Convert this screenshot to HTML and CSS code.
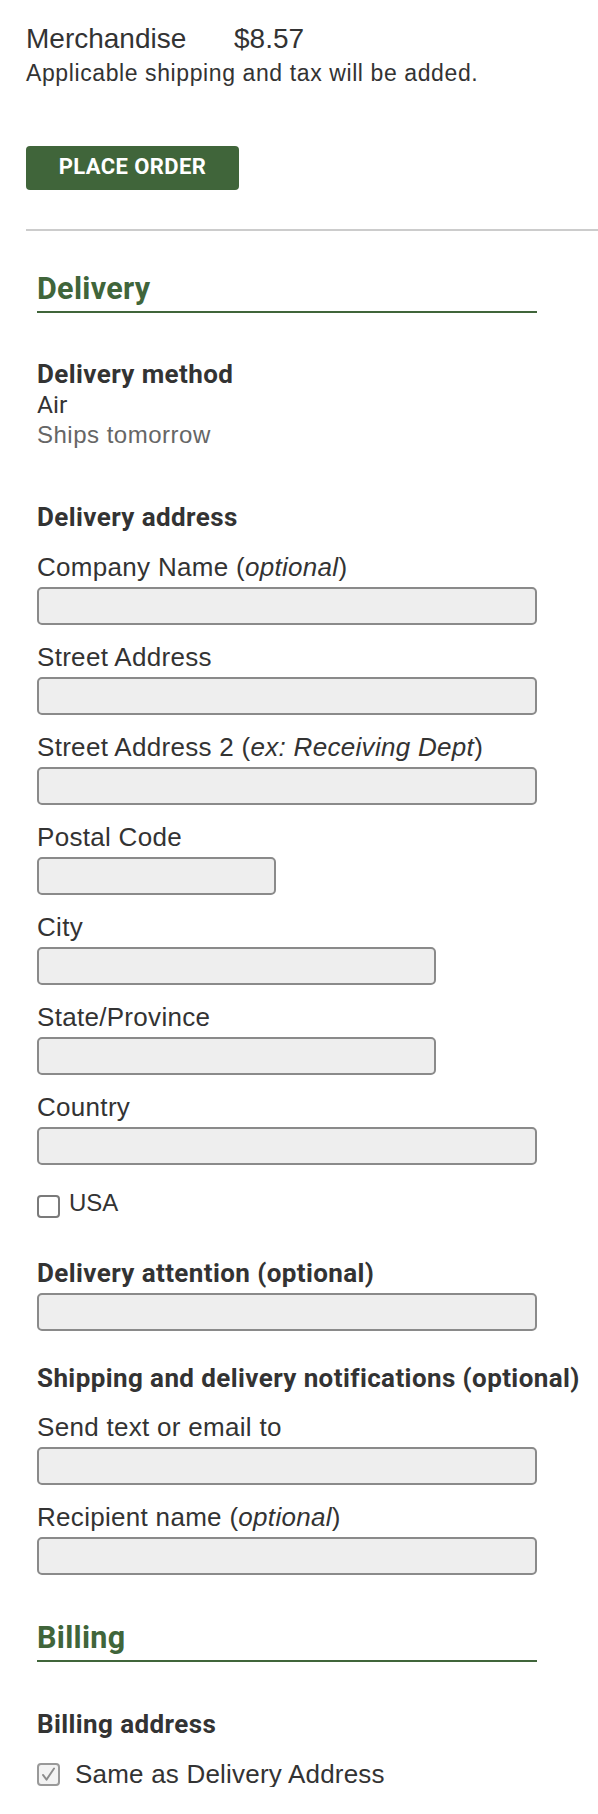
FILE: index.html
```html
<!DOCTYPE html>
<html lang="en">
  <head>
    <meta charset="UTF-8" />
    <meta name="viewport" content="width=device-width, initial-scale=1" />
    <title>Checkout</title>
    <link rel="stylesheet" href="styles.css">
  </head>
  <body>
    <main class="checkout">
      <section class="summary">
        <div class="total">
          <span class="total-label">Merchandise</span>
          <span class="total-value">$8.57</span>
        </div>
        <p class="note">Applicable shipping and tax will be added.</p>
        <button type="button" class="place-order">PLACE ORDER</button>
      </section>

      <hr class="divider" />

      <form class="panel" novalidate>
        <h2 class="panel-title">Delivery</h2>

        <h3 class="group-title method-title">Delivery method</h3>
        <p class="method-name">Air</p>
        <p class="method-info">Ships tomorrow</p>

        <h3 class="group-title address-title">Delivery address</h3>

        <div class="field first">
          <label for="company">Company Name (<em>optional</em>)</label>
          <input type="text" id="company" class="text-input" />
        </div>

        <div class="field">
          <label for="street">Street Address</label>
          <input type="text" id="street" class="text-input" />
        </div>

        <div class="field">
          <label for="street2">Street Address 2 (<em>ex: Receiving Dept</em>)</label>
          <input type="text" id="street2" class="text-input" />
        </div>

        <div class="field">
          <label for="postal">Postal Code</label>
          <input type="text" id="postal" class="text-input short" />
        </div>

        <div class="field">
          <label for="city">City</label>
          <input type="text" id="city" class="text-input medium" />
        </div>

        <div class="field">
          <label for="state">State/Province</label>
          <input type="text" id="state" class="text-input medium" />
        </div>

        <div class="field">
          <label for="country">Country</label>
          <input type="text" id="country" class="text-input" />
        </div>

        <label class="check-row usa" for="usa">
          <input type="checkbox" id="usa" />
          <span class="checkmark" aria-hidden="true"></span>
          USA
        </label>

        <div class="field attention">
          <label for="attention" class="group-title">Delivery attention (optional)</label>
          <input type="text" id="attention" class="text-input" />
        </div>

        <h3 class="group-title notify-title">Shipping and delivery notifications (optional)</h3>

        <div class="field notify-first">
          <label for="notify">Send text or email to</label>
          <input type="text" id="notify" class="text-input" />
        </div>

        <div class="field">
          <label for="recipient">Recipient name (<em>optional</em>)</label>
          <input type="text" id="recipient" class="text-input" />
        </div>

        <h2 class="panel-title billing-title">Billing</h2>

        <h3 class="group-title billing-address">Billing address</h3>

        <label class="check-row same" for="same">
          <input type="checkbox" id="same" checked disabled />
          <span class="checkmark" aria-hidden="true">
            <svg viewBox="0 0 24 24" aria-hidden="true">
              <polyline points="5 12.5 9.5 18.5 19 4.5"></polyline>
            </svg>
          </span>
          Same as Delivery Address
        </label>
      </form>
    </main>
  </body>
</html>
```

FILE: styles.css
```css
:root {
  --clr-green: #40653a;
  --clr-text: #333;
  --clr-muted: #666;
  --clr-field: #eee;
  --clr-border: #8a8a8a;
  --font-body: "Liberation Sans", Arial, sans-serif;
  --font-head: Roboto, "Liberation Sans", sans-serif;
}

* {
  box-sizing: border-box;
}

body {
  margin: 0;
  background: #fff;
  color: var(--clr-text);
  font-family: var(--font-body);
}

p,
h2,
h3 {
  margin: 0;
}

.checkout {
  padding-left: 26px;
}

/* Order summary */
.summary {
  padding-top: 21px;
}

.total {
  display: flex;
  font-size: 28px;
  line-height: 36px;
}

.total-label {
  width: 208px;
}

.note {
  font-size: 23px;
  line-height: 32px;
  letter-spacing: 0.6px;
}

.place-order {
  display: flex;
  align-items: center;
  justify-content: center;
  margin-top: 57px;
  width: 213px;
  height: 44px;
  padding: 0 0 4px;
  border: 0;
  border-radius: 4px;
  background: var(--clr-green);
  color: #fff;
  font-family: var(--font-head);
  font-size: 22px;
  font-weight: 700;
  letter-spacing: 0.4px;
  cursor: pointer;
}

.divider {
  margin: 39px 0 0;
  height: 2px;
  border: 0;
  background: #ccc;
}

/* Delivery / billing form */
.panel {
  display: flex;
  flex-direction: column;
  align-items: flex-start;
  width: 500px;
  margin-left: 11px;
}

.panel-title {
  align-self: stretch;
  margin-top: 40px;
  padding-bottom: 4px;
  border-bottom: 2px solid var(--clr-green);
  color: var(--clr-green);
  font-family: var(--font-head);
  font-size: 30.5px;
  font-weight: 700;
  line-height: 36px;
  letter-spacing: 0.3px;
}

.group-title {
  display: block;
  font-family: var(--font-head);
  font-size: 26px;
  font-weight: 700;
  line-height: 30px;
  letter-spacing: 0.4px;
  white-space: nowrap;
}

.method-title {
  margin-top: 46px;
}

.method-name {
  font-family: var(--font-head);
  font-size: 24.5px;
  line-height: 31px;
}

.method-info {
  color: var(--clr-muted);
  font-size: 24px;
  line-height: 30px;
  letter-spacing: 0.5px;
}

.address-title {
  margin-top: 52px;
}

.field {
  display: flex;
  flex-direction: column;
  gap: 5px;
  align-self: stretch;
  margin-top: 17px;
}

.field.first {
  margin-top: 20px;
}

.field label {
  font-size: 26px;
  line-height: 30px;
  letter-spacing: 0.3px;
}

.field label.group-title {
  font-size: 26px;
  letter-spacing: 0.4px;
}

.field em {
  font-style: italic;
}

.text-input {
  width: 100%;
  height: 38px;
  border: 2px solid var(--clr-border);
  border-radius: 5px;
  background: var(--clr-field);
  font: inherit;
}

.text-input.short {
  width: 239px;
}

.text-input.medium {
  width: 399px;
}

.field.attention {
  margin-top: 40px;
}

.notify-title {
  margin-top: 32px;
}

.field.notify-first {
  margin-top: 19px;
}

.billing-title {
  margin-top: 45px;
}

.billing-address {
  margin-top: 47px;
}

/* Checkbox rows */
.check-row {
  display: flex;
  align-items: flex-start;
  cursor: pointer;
  user-select: none;
}

.check-row input[type="checkbox"] {
  position: absolute;
  opacity: 0;
}

.checkmark {
  display: flex;
  align-items: center;
  justify-content: center;
  width: 23px;
  height: 23px;
  border: 2px solid #7a7a7a;
  border-radius: 4px;
  background: #fff;
}

.checkmark svg {
  width: 19px;
  height: 19px;
  fill: none;
  stroke: #8c8c8c;
  stroke-width: 2.4;
  stroke-linecap: round;
  stroke-linejoin: round;
}

.usa {
  margin-top: 26px;
  gap: 9px;
  font-size: 24px;
  line-height: 24px;
}

.usa .checkmark {
  margin-top: 4px;
}

.same {
  margin-top: 22px;
  gap: 15px;
  font-size: 26px;
  line-height: 26px;
  letter-spacing: 0.2px;
}

.same .checkmark {
  margin-top: 2px;
  background: #f3f3f3;
  border-color: #999;
}
```
